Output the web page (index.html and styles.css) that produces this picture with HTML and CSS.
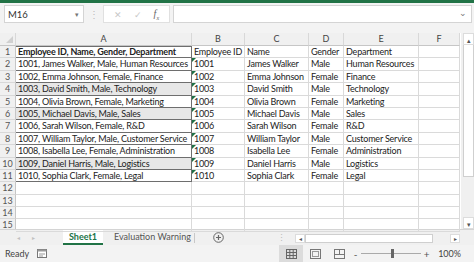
FILE: index.html
```html
<!DOCTYPE html>
<html lang="en">
<head>
    <meta charset="UTF-8">
    <title>Book1 - Excel</title>
    <link rel="stylesheet" href="styles.css">
</head>
<body>
    <div class="app">
        <div class="title-bar"></div>

        <!-- formula bar -->
        <div class="formula-bar">
            <div class="name-box">
                <span>M16</span>
                <span class="caret">&#9662;</span>
            </div>
            <div class="grip">&#8942;</div>
            <div class="fx-box">
                <span class="fx-btn">&#10005;</span>
                <span class="fx-btn">&#10003;</span>
                <span class="fx-btn fx">f<sub>x</sub></span>
            </div>
            <div class="formula-input">
                <span class="chev">&#8964;</span>
            </div>
        </div>

        <!-- sheet -->
        <div class="sheet-area">
            <div class="sheet" id="sheet">
                <div class="hd corner"><span class="corner-tri"></span></div>
                <div class="hd">A</div>
                <div class="hd">B</div>
                <div class="hd">C</div>
                <div class="hd">D</div>
                <div class="hd">E</div>
                <div class="hd">F</div>
            </div>
            <div class="vscroll">
                <div class="sb-btn">&#9652;</div>
                <div class="sb-thumb"></div>
                <div class="sb-track"></div>
                <div class="sb-btn">&#9662;</div>
            </div>
        </div>

        <!-- sheet tabs -->
        <div class="tab-bar">
            <div class="tab-nav"><span>&#9666;</span><span>&#9656;</span></div>
            <div class="tab active">Sheet1</div>
            <div class="tab">Evaluation Warning</div>
            <div class="tab-sep"></div>
            <div class="tab-add">
                <svg width="11" height="11" viewBox="0 0 11 11">
                    <circle cx="5.5" cy="5.5" r="4.8" fill="none" stroke="#666" stroke-width="1"/>
                    <path d="M5.5 3v5M3 5.5h5" stroke="#666" stroke-width="1.2"/>
                </svg>
            </div>
            <div class="hgrip">&#8942;</div>
            <div class="hscroll">
                <div class="hs-btn">&#9666;</div>
                <div class="hs-thumb"></div>
                <div class="hs-track"></div>
                <div class="hs-btn">&#9656;</div>
            </div>
        </div>

        <!-- status bar -->
        <div class="status-bar">
            <span class="ready">Ready</span>
            <svg class="macro" width="10" height="9" viewBox="0 0 10 9">
                <rect x="0.5" y="0.5" width="9" height="8" fill="#fff" stroke="#777"/>
                <rect x="0.5" y="0.5" width="9" height="2" fill="#999"/>
                <path d="M2 5h6M2 7h4" stroke="#999"/>
            </svg>
            <div class="status-right">
                <div class="view-btn on">
                    <svg width="11" height="10" viewBox="0 0 11 10">
                        <rect x="0.5" y="0.5" width="10" height="9" fill="none" stroke="#666"/>
                        <path d="M0.5 3.5h10M0.5 6.5h10M3.8 0.5v9M7.2 0.5v9" stroke="#666"/>
                    </svg>
                </div>
                <div class="view-btn">
                    <svg width="11" height="10" viewBox="0 0 11 10">
                        <rect x="0.5" y="0.5" width="10" height="9" fill="none" stroke="#777"/>
                        <rect x="2.5" y="2.5" width="6" height="5" fill="none" stroke="#999"/>
                    </svg>
                </div>
                <div class="view-btn">
                    <svg width="11" height="10" viewBox="0 0 11 10">
                        <rect x="0.5" y="0.5" width="10" height="9" fill="none" stroke="#777"/>
                        <path d="M5.5 0.5v5M0.5 5.5h10" stroke="#777"/>
                    </svg>
                </div>
                <div class="zoom">
                    <span class="zoom-sign">-</span>
                    <div class="zoom-line"><span class="zoom-thumb"></span></div>
                    <span class="zoom-sign">+</span>
                    <span class="zoom-pct">100%</span>
                </div>
            </div>
        </div>
    </div>

    <script>
        const rows = [
            ['Employee ID, Name, Gender, Department', 'Employee ID', 'Name', 'Gender', 'Department'],
            ['1001, James Walker, Male, Human Resources', '1001', 'James Walker', 'Male', 'Human Resources'],
            ['1002, Emma Johnson, Female, Finance', '1002', 'Emma Johnson', 'Female', 'Finance'],
            ['1003, David Smith, Male, Technology', '1003', 'David Smith', 'Male', 'Technology'],
            ['1004, Olivia Brown, Female, Marketing', '1004', 'Olivia Brown', 'Female', 'Marketing'],
            ['1005, Michael Davis, Male, Sales', '1005', 'Michael Davis', 'Male', 'Sales'],
            ['1006, Sarah Wilson, Female, R&D', '1006', 'Sarah Wilson', 'Female', 'R&D'],
            ['1007, William Taylor, Male, Customer Service', '1007', 'William Taylor', 'Male', 'Customer Service'],
            ['1008, Isabella Lee, Female, Administration', '1008', 'Isabella Lee', 'Female', 'Administration'],
            ['1009, Daniel Harris, Male, Logistics', '1009', 'Daniel Harris', 'Male', 'Logistics'],
            ['1010, Sophia Clark, Female, Legal', '1010', 'Sophia Clark', 'Female', 'Legal']
        ];
        const shaded = [4, 6, 10];
        const sheet = document.getElementById('sheet');

        function cell(text, cls) {
            const el = document.createElement('div');
            el.className = cls;
            el.textContent = text;
            sheet.appendChild(el);
        }

        for (let r = 1; r <= 15; r++) {
            const data = rows[r - 1] || ['', '', '', '', ''];
            cell(r, 'rn');
            let aCls = 'c';
            if (r <= 11) aCls += ' boxed';
            if (r === 1) aCls += ' bold top';
            if (shaded.includes(r)) aCls += ' shade';
            cell(data[0], aCls);
            cell(data[1], r >= 2 && r <= 11 ? 'c flag' : 'c');
            cell(data[2], 'c');
            cell(data[3], 'c');
            cell(data[4], 'c');
            cell('', 'c');
        }
    </script>
</body>
</html>
```

FILE: styles.css
```css
* {
    margin: 0;
    padding: 0;
    box-sizing: border-box;
}

body {
    width: 474px;
    height: 262px;
    overflow: hidden;
    background: #fff;
    font-family: Lato, 'Liberation Sans', Arial, sans-serif;
    color: #222;
}

.app {
    display: flex;
    flex-direction: column;
    height: 262px;
}

.title-bar {
    height: 3px;
    background: #217346;
}

/* formula bar */
.formula-bar {
    height: 27px;
    background: #f3f3f3;
    display: flex;
    align-items: flex-start;
    padding: 2px 2px 0 4px;
}

.name-box {
    width: 80px;
    height: 18px;
    background: #fff;
    border: 1px solid #d4d4d4;
    display: flex;
    align-items: center;
    justify-content: space-between;
    padding: 0 4px 0 3px;
    font-size: 9.5px;
    color: #333;
}

.caret {
    font-size: 7px;
    color: #777;
}

.grip {
    width: 19px;
    height: 18px;
    text-align: center;
    line-height: 18px;
    font-size: 10px;
    color: #bbb;
}

.fx-box {
    width: 67px;
    height: 18px;
    background: #fff;
    border: 1px solid #e0e0e0;
    display: flex;
    align-items: center;
    justify-content: space-around;
    padding: 0 4px;
}

.fx-btn {
    font-size: 9px;
    color: #c8c8c8;
}

.fx-btn.fx {
    font-family: 'Liberation Serif', serif;
    font-style: italic;
    color: #666;
    font-size: 10px;
}

.fx-btn sub {
    font-size: 6px;
}

.formula-input {
    flex: 1;
    margin-left: 3px;
    height: 18px;
    background: #fff;
    border: 1px solid #d4d4d4;
    display: flex;
    justify-content: flex-end;
    align-items: center;
    padding-right: 4px;
}

.chev {
    font-size: 9px;
    color: #777;
    line-height: 1;
    margin-top: -4px;
}

/* grid */
.sheet-area {
    display: flex;
    height: 199px;
    border-top: 3px solid #f3f3f3;
}

.sheet {
    display: grid;
    grid-template-columns: 16px 176px 53px 64px 35px 75px 41px;
    grid-template-rows: 13px;
    grid-auto-rows: 12.4px;
    width: 460px;
    font-size: 9px;
    letter-spacing: -0.2px;
    align-content: start;
}

.hd {
    background: #f0f0f0;
    border-right: 1px solid #d8d8d8;
    border-bottom: 1px solid #c6c6c6;
    color: #444;
    font-size: 9px;
    letter-spacing: 0;
    text-align: center;
    line-height: 12px;
}

.corner {
    position: relative;
}

.corner-tri {
    position: absolute;
    right: 2px;
    bottom: 2px;
    width: 0;
    height: 0;
    border-left: 7px solid transparent;
    border-bottom: 7px solid #d0d0d0;
}

.rn {
    background: #f0f0f0;
    border-right: 1px solid #c6c6c6;
    border-bottom: 1px solid #d8d8d8;
    color: #555;
    text-align: center;
    font-size: 9px;
    letter-spacing: 0;
    line-height: 12px;
}

.c {
    border-right: 1px solid #dadada;
    border-bottom: 1px solid #dadada;
    padding-left: 2px;
    line-height: 12px;
    white-space: nowrap;
    overflow: hidden;
    position: relative;
}

.c.boxed {
    border-right: 1px solid #6e6e6e;
    border-bottom: 1px solid #6e6e6e;
}

.c.top {
    box-shadow: inset 0 1px 0 #6e6e6e;
}

.c.bold {
    font-weight: bold;
}

.c.shade {
    background: #e7e7e7;
}

.c.flag::before {
    content: '';
    position: absolute;
    left: 0;
    top: 0;
    border-top: 4px solid #1e7145;
    border-right: 4px solid transparent;
}

/* vertical scrollbar */
.vscroll {
    width: 14px;
    display: flex;
    flex-direction: column;
    background: #f0f0f0;
    padding-left: 2px;
    border-left: 1px solid #fff;
}

.sb-btn {
    height: 12px;
    font-size: 7px;
    color: #555;
    text-align: center;
    line-height: 12px;
    background: #fff;
    border: 1px solid #dcdcdc;
}

.sb-thumb {
    height: 132px;
    background: #fff;
    border: 1px solid #cfcfcf;
    border-top: none;
}

.sb-track {
    flex: 1;
}

/* sheet tabs */
.tab-bar {
    height: 16px;
    background: #f0f0f0;
    border-top: 1px solid #d4d4d4;
    display: flex;
    align-items: stretch;
    font-size: 9px;
}

.tab-nav {
    width: 63px;
    display: flex;
    gap: 12px;
    padding-left: 17px;
    align-items: center;
    color: #c0c0c0;
    font-size: 6px;
}

.tab {
    padding: 0 3px 0 11px;
    line-height: 14px;
    color: #555;
}

.tab.active {
    background: #fff;
    color: #217346;
    font-weight: bold;
    border-bottom: 2px solid #217346;
    width: 40px;
    padding: 0;
    text-align: center;
}

.tab-sep {
    width: 1px;
    margin: 3px 0 2px;
    background: #c8c8c8;
}

.tab-add {
    width: 48px;
    display: flex;
    align-items: center;
    justify-content: center;
}

.hgrip {
    flex: 1;
    text-align: right;
    padding-right: 9px;
    color: #bbb;
    font-size: 9px;
    line-height: 15px;
}

.hscroll {
    width: 165px;
    margin-right: 14px;
    display: flex;
    height: 9px;
    margin-top: 4px;
    font-size: 6px;
    color: #555;
}

.hs-btn {
    width: 10px;
    background: #fff;
    border: 1px solid #dcdcdc;
    text-align: center;
    line-height: 7px;
}

.hs-thumb {
    width: 128px;
    background: #fff;
    border: 1px solid #cfcfcf;
}

.hs-track {
    flex: 1;
}

/* status bar */
.status-bar {
    flex: 1;
    background: #f3f3f3;
    display: flex;
    align-items: center;
    padding-left: 5px;
    font-size: 9px;
    color: #444;
}

.macro {
    margin-left: 8px;
}

.status-right {
    margin-left: auto;
    display: flex;
    align-items: stretch;
    height: 100%;
}

.view-btn {
    width: 24px;
    display: flex;
    align-items: center;
    justify-content: center;
}

.view-btn.on {
    background: #dcdcdc;
}

.zoom {
    display: flex;
    align-items: center;
    padding-left: 1px;
    padding-right: 13px;
}

.zoom-sign {
    font-size: 10px;
    color: #555;
    width: 7px;
    text-align: center;
}

.zoom-line {
    width: 60px;
    height: 1px;
    background: #aaa;
    margin: 0 2px;
    position: relative;
}

.zoom-thumb {
    position: absolute;
    left: 30px;
    top: -4px;
    width: 3px;
    height: 9px;
    background: #666;
}

.zoom-pct {
    margin-left: 8px;
}
```
